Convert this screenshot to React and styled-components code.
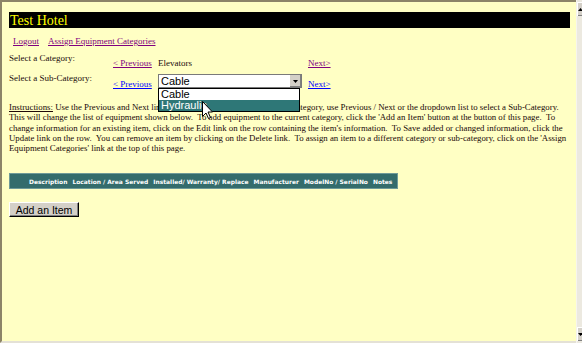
import React from "react";
import styled, { createGlobalStyle } from "styled-components";

const Global = createGlobalStyle`
  html, body { margin: 0; padding: 0; background: #ffffc4; }
  body { width: 582px; height: 343px; overflow: hidden; }
`;

const Frame = styled.div`
  width: 582px;
  height: 343px;
  display: flex;
  background: #ffffc4;
  position: relative;
  overflow: hidden;
`;

const Page = styled.div`
  flex: 1;
  border-top: 2px solid #8c8468;
  border-left: 2px solid #8c8468;
  border-bottom: 2px solid #e4e1d6;
  padding: 10px 6px 0 7px;
  font-family: "Liberation Serif", "Times New Roman", serif;
  font-size: 9px;
  color: #1a0a0a;
  position: relative;
`;

const TitleBar = styled.div`
  background: #000;
  color: #ffff00;
  height: 16px;
  font-size: 14px;
  line-height: 17px;
  padding-left: 1px;
`;

const LinkRow = styled.div`
  display: flex;
  gap: 9px;
  padding: 8px 0 0 4px;
  height: 12px;
  line-height: 11px;
`;

const Link = styled.a`
  color: ${(p) => (p.$visited ? "#800080" : "#0000ff")};
  text-decoration: underline;
  cursor: pointer;
`;

const Picker = styled.div`
  display: grid;
  grid-template-columns: 104px 45px 150px auto;
  grid-template-rows: 20px 20px;
  margin-top: 5px;
  position: relative;
`;

const Label = styled.div`
  line-height: 11px;
`;

const Cell = styled.div`
  padding-top: ${(p) => p.$pt || 4}px;
  line-height: 11px;
`;

const Select = styled.div`
  width: 144px;
  height: 14px;
  box-sizing: border-box;
  border: 1px solid #7a7a7a;
  background: #fff;
  display: flex;
  font-family: "Liberation Sans", Arial, sans-serif;
  font-size: 11px;
  line-height: 12px;
  margin-top: 1px;
`;

const SelectValue = styled.div`
  flex: 1;
  padding-left: 2px;
  color: #000;
`;

const SelectButton = styled.div`
  width: 11px;
  background: #d4d0c8;
  border-left: 1px solid #fff;
  box-shadow: inset -1px -1px 0 #808080;
  display: flex;
  align-items: center;
  justify-content: center;
`;

const DropList = styled.div`
  position: absolute;
  left: 149px;
  top: 35px;
  width: 142px;
  box-sizing: border-box;
  border: 1px solid #000;
  background: #fff;
  font-family: "Liberation Sans", Arial, sans-serif;
  font-size: 11px;
  z-index: 3;
`;

const Option = styled.div`
  height: 11px;
  line-height: 11px;
  padding: 0 2px;
  background: ${(p) => (p.$active ? "#2e7777" : "#fff")};
  color: ${(p) => (p.$active ? "#fff" : "#000")};
  overflow: hidden;
`;

const Instructions = styled.p`
  margin: 9px 0 0 0;
  width: 561px;
  font-size: 8.8px;
  line-height: 10.3px;
  color: #200808;
`;

const U = styled.span`
  text-decoration: underline;
`;

const Grid = styled.div`
  margin-top: 20px;
  width: 389px;
  height: 16px;
  box-sizing: border-box;
  background: #346c6c;
  border: 1px solid #6f9a98;
  display: flex;
  align-items: center;
  padding-left: 19px;
  gap: 5px;
  font-family: "DejaVu Sans", Verdana, sans-serif;
  font-weight: bold;
  font-size: 5.95px;
  color: #fff;
  white-space: nowrap;
`;

const AddButton = styled.button`
  display: block;
  margin-top: 13px;
  width: 70px;
  height: 15px;
  padding: 0;
  background: #d4d0c8;
  border: 1px solid;
  border-color: #fff #000 #000 #fff;
  box-shadow: inset -1px -1px 0 #808080;
  font-family: "Liberation Sans", Arial, sans-serif;
  font-size: 10.5px;
  color: #000;
  line-height: 12px;
`;

const Scrollbar = styled.div`
  width: 10px;
  background: #ece9e0;
  border-left: 1px solid #f6f4ee;
  display: flex;
  flex-direction: column;
  justify-content: space-between;
  padding: 2px 0 2px 0;
`;

const ScrollBtn = styled.div`
  height: 13px;
  background: #d4d0c8;
  border-top: 1px solid #fff;
  border-left: 1px solid #fff;
  box-shadow: inset -1px -1px 0 #808080;
  display: flex;
  align-items: center;
  justify-content: center;
`;

const Cursor = styled.svg`
  position: absolute;
  left: 202px;
  top: 101px;
  z-index: 5;
`;

const Tri = ({ down = true }) => (
  <svg width="5" height="3" viewBox="0 0 5 3">
    <path d={down ? "M0 0H5L2.5 3Z" : "M0 3H5L2.5 0Z"} fill="#000" />
  </svg>
);

export default function App() {
  return (
    <Frame>
      <Global />
      <Page>
        <TitleBar>Test Hotel</TitleBar>
        <LinkRow>
          <Link $visited>Logout</Link>
          <Link $visited>Assign Equipment Categories</Link>
        </LinkRow>
        <Picker>
          <Label>Select a Category:</Label>
          <Cell $pt={5}>
            <Link $visited>&lt; Previous</Link>
          </Cell>
          <Cell $pt={5}>Elevators</Cell>
          <Cell $pt={5}>
            <Link $visited>Next&gt;</Link>
          </Cell>
          <Label>Select a Sub-Category:</Label>
          <Cell $pt={6}>
            <Link>&lt; Previous</Link>
          </Cell>
          <div>
            <Select>
              <SelectValue>Cable</SelectValue>
              <SelectButton>
                <Tri />
              </SelectButton>
            </Select>
          </div>
          <Cell $pt={6}>
            <Link>Next&gt;</Link>
          </Cell>
          <DropList>
            <Option>Cable</Option>
            <Option $active>Hydraulic</Option>
          </DropList>
        </Picker>
        <Instructions>
          <U>Instructions:</U> Use the Previous and Next links to select a Category.{"\u00a0 "}Within
          each Category, use Previous / Next or the dropdown list to select a Sub-Category.
          This will change the list of equipment shown below.{"\u00a0 "}To add equipment to the
          current category, click the 'Add an Item' button at the button of this page.{"\u00a0 "}To
          change information for an existing item, click on the Edit link on the row
          containing the item's information.{"\u00a0 "}To Save added or changed information,
          click the Update link on the row.{"\u00a0 "}You can remove an item by clicking on
          the Delete link.{"\u00a0 "}To assign an item to a different category or
          sub-category, click on the 'Assign Equipment Categories' link at the top of this
          page.
        </Instructions>
        <Grid>
          <span>Description</span>
          <span>Location / Area Served</span>
          <span>Installed/ Warranty/ Replace</span>
          <span>Manufacturer</span>
          <span>ModelNo / SerialNo</span>
          <span>Notes</span>
        </Grid>
        <AddButton>Add an Item</AddButton>
      </Page>
      <Scrollbar>
        <ScrollBtn>
          <Tri down={false} />
        </ScrollBtn>
        <ScrollBtn>
          <Tri />
        </ScrollBtn>
      </Scrollbar>
      <Cursor width="12" height="19" viewBox="0 0 12 19">
        <path
          d="M0.5 0.5V15.5L4 12L6.5 17.5L8.5 16.5L6 11H10.5Z"
          fill="#fff"
          stroke="#000"
          strokeWidth="1"
        />
      </Cursor>
    </Frame>
  );
}
